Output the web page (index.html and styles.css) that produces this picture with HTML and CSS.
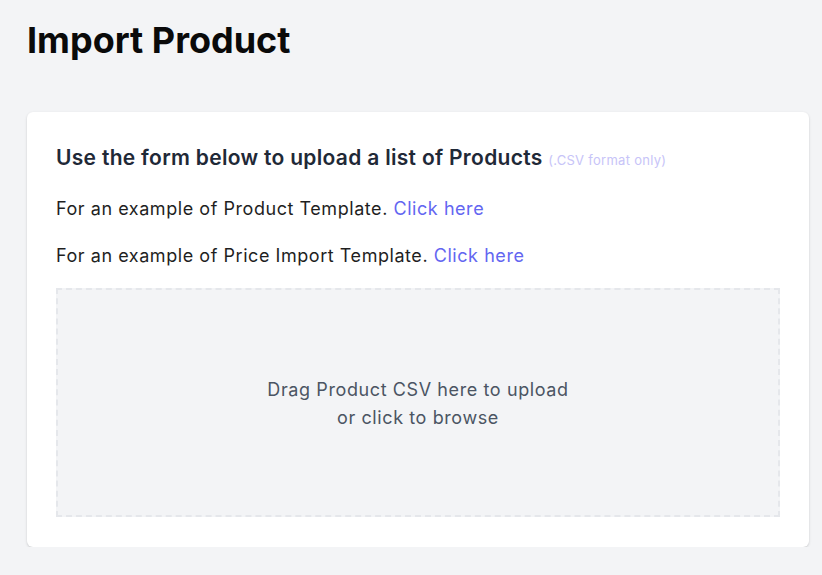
FILE: index.html
```html
<!DOCTYPE html>
<html>
<head>
<meta charset="utf-8">
<link rel="stylesheet" href="styles.css">
</head>
<body>
<main class="page">
  <h1 class="title">Import Product</h1>
  <section class="card">
    <h2 class="card-heading">Use the form below to upload a list of Products <span class="hint">(.CSV format only)</span></h2>
    <p class="line">For an example of Product Template. <a class="link" href="#">Click here</a></p>
    <p class="line">For an example of Price Import Template. <a class="link" href="#">Click here</a></p>
    <div class="dropzone">
      <p class="drop-text">Drag Product CSV here to upload<br>or click to browse</p>
    </div>
  </section>
</main>
</body>
</html>
```
FILE: styles.css
```css
html, body {
  margin: 0;
  padding: 0;
  background: #f3f4f6;
  font-family: Inter, "Noto Sans", sans-serif;
}
.page {
  padding: 18px 13px 0 27px;
}
.title {
  margin: 0;
  font-size: 36px;
  line-height: 44px;
  font-weight: 700;
  color: #0a0a0a;
}
.card {
  margin-top: 50px;
  background: #fff;
  border-radius: 6px;
  box-shadow: 0 1px 3px rgba(0,0,0,0.12), 0 1px 2px rgba(0,0,0,0.06);
  padding: 32px 29px 30px 29px;
}
.card-heading {
  margin: 0;
  font-size: 21px;
  line-height: 28px;
  font-weight: 600;
  letter-spacing: 0.3px;
  color: #1f2937;
}
.hint {
  font-size: 13px;
  font-weight: 400;
  letter-spacing: 0.28px;
  color: #c7c4f8;
}
.line {
  margin: 19px 0 0 0;
  padding-top: 2px;
  font-size: 18px;
  line-height: 28px;
  letter-spacing: 0.55px;
  color: #1f1f1f;
}
.line + .line {
  padding-top: 0;
}
.link {
  color: #6366f1;
  text-decoration: none;
}
.dropzone {
  margin-top: 18px;
  height: 225px;
  border: 2px dashed #e5e7eb;
  background: #f3f4f6;
  display: flex;
  align-items: center;
  justify-content: center;
}
.drop-text {
  margin: 0;
  padding-top: 2px;
  text-align: center;
  font-size: 18px;
  line-height: 28px;
  letter-spacing: 0.6px;
  color: #4b5563;
}
```
